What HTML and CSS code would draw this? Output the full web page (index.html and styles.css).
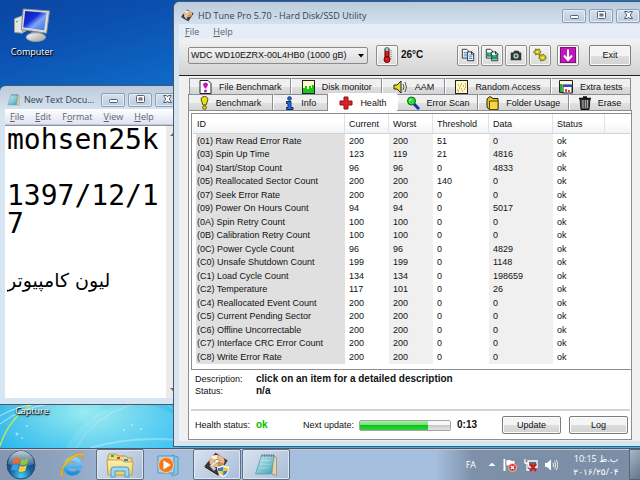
FILE: index.html
```html
<!DOCTYPE html>
<html lang="en">
<head>
<meta charset="utf-8">
<title>Desktop</title>
<link rel="stylesheet" href="styles.css">
</head>
<body>
<svg class="defs" width="0" height="0" aria-hidden="true">
  <defs>
    <linearGradient id="screen" x1="0" y1="0" x2="1" y2="1"><stop offset="0" stop-color="#0a1fa8"/><stop offset=".4" stop-color="#1230d8"/><stop offset=".6" stop-color="#7fa4f4"/><stop offset="1" stop-color="#2f6fe8"/></linearGradient>
    <linearGradient id="metal" x1="0" y1="0" x2="1" y2="1"><stop offset="0" stop-color="#fff"/><stop offset="1" stop-color="#9a9a9a"/></linearGradient>
    <radialGradient id="orb" cx=".5" cy=".9" r=".9"><stop offset="0" stop-color="#3fd0f6"/><stop offset=".45" stop-color="#155f9f"/><stop offset="1" stop-color="#173a64"/></radialGradient>
    <linearGradient id="gloss" x1="0" y1="0" x2="0" y2="1"><stop offset="0" stop-color="#fff" stop-opacity=".75"/><stop offset="1" stop-color="#fff" stop-opacity=".1"/></linearGradient>
    <linearGradient id="ie" x1="0" y1="0" x2="0" y2="1"><stop offset="0" stop-color="#7fdcff"/><stop offset="1" stop-color="#1b8fdc"/></linearGradient>
    <linearGradient id="page" x1="0" y1="0" x2="1" y2="1"><stop offset="0" stop-color="#c8f0f4"/><stop offset="1" stop-color="#3fa0b4"/></linearGradient>
    <linearGradient id="folder" x1="0" y1="0" x2="0" y2="1"><stop offset="0" stop-color="#fdf3b4"/><stop offset="1" stop-color="#eccb62"/></linearGradient>
    <symbol id="hdd" viewBox="0 0 32 32">
      <path d="M15 1 31 11 19 29 1 18z" fill="#3a3531"/><path d="M1 18 19 29v2L1 20z" fill="#17130f"/>
      <ellipse cx="17" cy="12" rx="10" ry="8" fill="#e9b98a"/><path d="M17 12 9 7a10 8 0 0 1 8-3z" fill="#fff3e2"/><path d="M17 12l9 3a10 8 0 0 1-7 5z" fill="#c98a54"/>
      <ellipse cx="17" cy="12" rx="3" ry="2.4" fill="#fff" stroke="#8a6a4a"/>
      <path d="M7 18l4-2 5 6-3 3z" fill="#c8c8c8"/><path d="M10 17l8-5" stroke="#eee" stroke-width="1.5"/>
    </symbol>
    <symbol id="notes" viewBox="0 0 32 32">
      <path d="M25 4l5 2v24l-6-2z" fill="#e4d4ae" stroke="#9c8a62"/><path d="M10 3h17l-4 25H2z" fill="url(#page)" stroke="#5b9aa6"/>
      <path d="M11 2v3M14 2v3M17 2v3M20 2v3M23 2v3M26 2v3" stroke="#6b6f70" stroke-width="1.4"/><path d="M9 10h14M8 15h14M7 20h14" stroke="#fff" stroke-opacity=".4"/>
    </symbol>
    <symbol id="min" viewBox="0 0 11 9"><rect x="1.5" y="4.5" width="8" height="3" rx="1" fill="#fff" stroke="#555f6c"/></symbol>
    <symbol id="max" viewBox="0 0 11 9"><rect x="1.5" y=".5" width="8" height="7" rx="1" fill="#fff" stroke="#555f6c"/><rect x="4" y="3" width="3" height="2" fill="#9fb0c4" stroke="#555f6c"/></symbol>
    <symbol id="cls" viewBox="0 0 11 9"><path d="M1.500.5h3l1 1.500 1-1.500h3L7.200 4 9.500 7.500h-3l-1-1.500-1 1.500h-3L3.800 4z" fill="#fff" stroke="#555f6c"/></symbol>
    <symbol id="docs" viewBox="0 0 16 16"><path d="M1.500 1.500h5l2 2v8h-7z" fill="#fff" stroke="#222"/><path d="M7.500 4.500h5l2 2v8h-7z" fill="#fff" stroke="#222"/><path d="M12 4v3h3" fill="none" stroke="#222"/></symbol>
  </defs>
</svg>

<main class="desktop">
  <svg class="streaks" viewBox="0 0 180 44" preserveAspectRatio="xMinYMax slice" aria-hidden="true">
    <circle cx="135" cy="76" r="76" fill="#fff" fill-opacity=".1"/>
    <path d="M76 44Q94 12 130 1t50 12" fill="none" stroke="#fff" stroke-opacity=".25"/>
    <path d="M90 44Q130 32 180 36" fill="none" stroke="#fff" stroke-opacity=".3" stroke-width="2"/>
    <path d="M0 42Q10 10 43-6" fill="none" stroke="#b4e85c" stroke-width="1.500"/>
    <path d="M0 20Q22 3 50 0M0 12Q16 2 38 0" fill="none" stroke="#fff" stroke-opacity=".6"/>
    <g fill="#fff" fill-opacity=".5"><circle cx="17" cy="30" r="1.500"/><circle cx="27" cy="22" r="1"/><circle cx="22" cy="34" r="1"/><circle cx="124" cy="26" r="1"/><circle cx="132" cy="21" r="1"/><circle cx="141" cy="25" r="1"/></g>
  </svg>

  <a class="shortcut computer" href="#computer">
    <svg width="38" height="35" viewBox="0 0 38 36" aria-hidden="true">
      <path d="M1 11l8-3v18l-8-1z" fill="#e4e4e4" stroke="#9b9b9b"/><path d="M9 8l4-1v17l-4 2z" fill="#b4b4b4"/><circle cx="3.500" cy="14" r="1" fill="#2fd02f"/>
      <path d="M18 25h10v4H18z" fill="#b4b4b4"/><ellipse cx="23" cy="30" rx="10" ry="4.500" fill="url(#metal)" stroke="#999"/>
      <path d="M10 1l27 2-3 23L8 22z" fill="#dcdcdc" stroke="#8c8c8c"/><path d="M12 3l22 2-2.500 18L10 20z" fill="url(#screen)"/>
    </svg>
    <span>Computer</span>
  </a>
  <a class="shortcut capture" href="#capture"><span>Capture</span></a>

  <section class="window notepad" aria-label="New Text Document">
    <header class="titlebar">
      <svg width="13" height="14" aria-hidden="true"><use href="#notes"/></svg>
      <h2>New Text Docu...</h2>
      <div class="controls">
        <button type="button" aria-label="Minimize"><svg width="11" height="9"><use href="#min"/></svg></button>
        <button type="button" aria-label="Maximize"><svg width="11" height="9"><use href="#max"/></svg></button>
        <button type="button" aria-label="Close"><svg width="11" height="9"><use href="#cls"/></svg></button>
      </div>
    </header>
    <nav class="menubar">
      <button type="button"><u>F</u>ile</button><button type="button"><u>E</u>dit</button><button type="button">F<u>o</u>rmat</button><button type="button"><u>V</u>iew</button><button type="button"><u>H</u>elp</button>
    </nav>
    <div class="paper">
      <div class="sheet">
        <textarea class="note" rows="5" spellcheck="false" aria-label="Note text">mohsen25k

1397/12/17
</textarea>
        <textarea class="note note-fa" rows="1" lang="fa" spellcheck="false" aria-label="Note text, Persian">لیون کامپیوتر</textarea>
      </div>
      <div class="scrolltrack"><i></i><i class="down"></i></div>
    </div>
  </section>

  <section class="window hdtune" aria-label="HD Tune Pro">
    <header class="titlebar">
      <svg width="13" height="13" aria-hidden="true"><use href="#hdd"/></svg>
      <h1>HD Tune Pro 5.70 - Hard Disk/SSD Utility</h1>
      <div class="controls">
        <button type="button" aria-label="Minimize"><svg width="11" height="9"><use href="#min"/></svg></button>
        <button type="button" aria-label="Maximize"><svg width="11" height="9"><use href="#max"/></svg></button>
        <button type="button" aria-label="Close"><svg width="11" height="9"><use href="#cls"/></svg></button>
      </div>
    </header>
    <nav class="menubar"><button type="button"><u>F</u>ile</button><button type="button"><u>H</u>elp</button></nav>

    <div class="client">
      <div class="toolbar">
        <div class="drive">
          <select aria-label="Drive"><option>WDC WD10EZRX-00L4HB0 (1000 gB)</option></select>
          <svg width="6" height="4" viewBox="0 0 6 4" aria-hidden="true"><path d="M0 0h6L3 3.500z" fill="#000"/></svg>
        </div>
        <button class="tool" type="button" aria-label="Temperature"><svg width="14" height="16" viewBox="0 0 14 16"><rect x="5" y="1" width="4" height="11" rx="1" fill="#e01818" stroke="#400"/><rect x="5.500" y="1" width="3" height="3" fill="#5fd8e0"/><circle cx="7" cy="12.500" r="3" fill="#e01818" stroke="#600"/><path d="M11 3v9" stroke="#a05050" stroke-dasharray="1 1"/></svg></button>
        <strong class="temp">26°C</strong>
        <div class="tools">
          <button class="tool" type="button" aria-label="Copy text"><svg width="14" height="14" viewBox="0 0 16 16"><use href="#docs"/><path d="M3 5h4M3 7h4M3 9h4M9 8h4M9 10h4M9 12h4" stroke="#2478d8"/></svg></button>
          <button class="tool" type="button" aria-label="Copy picture"><svg width="14" height="14" viewBox="0 0 16 16"><use href="#docs"/><path d="M2 5h5v5H2zM8 8h6v5H8z" fill="#12a050"/><path d="M4 6h2v2H4zM10 8h2v2h-2z" fill="#28b8e8"/></svg></button>
          <button class="tool" type="button" aria-label="Save screenshot"><svg width="14" height="14" viewBox="0 0 16 16"><path d="M2 5h3l1-2h5l1 2h2v9H2z" fill="#333"/><circle cx="8" cy="9" r="3" fill="#b8d4c8"/><circle cx="8" cy="9" r="1.500" fill="#2a7050"/></svg></button>
          <button class="tool" type="button" aria-label="Options"><svg width="14" height="14" viewBox="0 0 16 16"><g fill="#c8bc18" stroke="#6a6408"><path d="M1 4l2-1V1l2 1 2-1 1 2 1 1-1 2-1 2-2-1-2 1-1-2-1-1z"/><path d="M7 10l1-2 2 0 1-1 2 1 1 1 1 2-1 2-1 1-2 0-2 1-1-2-1-1z"/></g><circle cx="5" cy="4.500" r="1.200" fill="#fff880"/><circle cx="11" cy="11" r="1.300" fill="#fff880"/></svg></button>
          <button class="tool apart" type="button" aria-label="Minimize to tray"><svg width="16" height="16" viewBox="0 0 16 16"><rect x=".5" y=".5" width="15" height="15" fill="#c018b8" stroke="#801080"/><path d="M8 2.500v10M4 8.500l4 4.500 4-4.500" fill="none" stroke="#fff" stroke-width="2"/></svg></button>
        </div>
        <button class="push exit" type="button">Exit</button>
      </div>

      <div class="tabs" role="tablist">
        <div class="tabrow back">
          <button role="tab" type="button"><svg width="13" height="14" viewBox="0 0 13 14"><path d="M1 .5h8l3 3v10H1z" fill="#fff" stroke="#222"/><path d="M6.500 2.500Q10 3 8.500 6L7 8.500H6L4.500 6Q3 3 6.500 2.500z" fill="#c018c0"/><circle cx="6.500" cy="11" r="1.500" fill="#c018c0"/></svg>File Benchmark</button>
          <button role="tab" type="button"><svg width="13" height="14" viewBox="0 0 13 14"><rect x=".5" y=".5" width="12" height="13" fill="#fffbc8" stroke="#222"/><path d="M1 13V8h2V6h2v3h2V6h2v2h1V5h2v8z" fill="#18c818"/></svg>Disk monitor</button>
          <button role="tab" type="button"><svg width="15" height="14" viewBox="0 0 15 14"><path d="M1 5h3l4-4v12L4 9H1z" fill="#e8dc18" stroke="#222"/><path d="M10 4q2 3 0 6M12 2q3 5 0 10" fill="none" stroke="#555"/></svg>AAM</button>
          <button role="tab" type="button"><svg width="13" height="14" viewBox="0 0 13 14"><rect x=".5" y=".5" width="12" height="13" fill="#fffbc8" stroke="#222"/><path d="M2 10h1M4 8h1M6 9h1M8 6h1M10 4h1M3 5h1M6 4h1M9 9h1" stroke="#d8a018" stroke-width="1.500"/><path d="M3 11h1M7 11h1M5 6h1M10 7h1" stroke="#d04040"/></svg>Random Access</button>
          <button role="tab" type="button"><svg width="14" height="14" viewBox="0 0 14 14"><path d="M.5.5h13v12H.5z" fill="#fffbd8" stroke="#222"/><path d="M1 4h2v8H1z" fill="#18b818"/><rect x="4" y="5" width="9" height="8" fill="#fff" stroke="#222"/><path d="M4 5h9v2H4z" fill="#2848d8"/><path d="M6 12V9h2v3zM9 12v-2h2v2z" fill="#e04040"/></svg>Extra tests</button>
        </div>
        <div class="tabrow front">
          <button role="tab" type="button"><svg width="9" height="14" viewBox="0 0 9 14"><path d="M4.500.5Q9 1 7.500 5L6 9H3L1.500 5Q0 1 4.500.5z" fill="#e8e018" stroke="#555008"/><circle cx="4.500" cy="11.500" r="1.800" fill="#e8e018" stroke="#555008"/></svg>Benchmark</button>
          <button role="tab" type="button"><svg width="9" height="14" viewBox="0 0 9 14"><circle cx="4.500" cy="2.500" r="1.800" fill="#1878e0" stroke="#102860"/><path d="M1.500 5.500h4.500v6h2v2H1.500v-2H3v-4H1.500z" fill="#1878e0" stroke="#102860"/></svg>Info</button>
          <button role="tab" type="button" aria-selected="true"><svg width="14" height="14" viewBox="0 0 14 14"><path d="M5 1h4v4h4v4H9v4H5V9H1V5h4z" fill="#e02020" stroke="#801818"/></svg>Health</button>
          <button role="tab" type="button"><svg width="14" height="14" viewBox="0 0 14 14"><path d="M8 8l5 5" stroke="#1830a8" stroke-width="3"/><circle cx="5.500" cy="5" r="4" fill="#28e038" stroke="#185818"/><path d="M3.500 5q0-2 2-2" fill="none" stroke="#c8ffc8"/></svg>Error Scan</button>
          <button role="tab" type="button"><svg width="13" height="14" viewBox="0 0 13 14"><path d="M1 3l3-2.500 3 2h5v11H3L1 11z" fill="#e8c820" stroke="#222"/><path d="M3.500 5h8.500v8.500H3.500z" fill="#f4d840" stroke="#5a4a08"/></svg>Folder Usage</button>
          <button role="tab" type="button"><svg width="12" height="14" viewBox="0 0 12 14"><path d="M1 3h10l-1 10.500H2z" fill="#4a4a4a" stroke="#111"/><path d="M0 2.500h12M4 1h4" stroke="#111" stroke-width="1.500"/><path d="M4 4v8M6.500 4v8M8.500 4v8" stroke="#aaa"/></svg>Erase</button>
        </div>
      </div>

      <div class="panel" role="tabpanel">
        <div class="list">
          <table>
            <colgroup><col class="c-id"><col class="c-cur"><col class="c-worst"><col class="c-thr"><col class="c-data"><col class="c-stat"><col></colgroup>
            <thead><tr><th>ID</th><th>Current</th><th>Worst</th><th>Threshold</th><th>Data</th><th>Status</th><th></th></tr></thead>
            <tbody>
              <tr><td>(01) Raw Read Error Rate</td><td>200</td><td>200</td><td>51</td><td>0</td><td>ok</td><td></td></tr>
              <tr><td>(03) Spin Up Time</td><td>123</td><td>119</td><td>21</td><td>4816</td><td>ok</td><td></td></tr>
              <tr><td>(04) Start/Stop Count</td><td>96</td><td>96</td><td>0</td><td>4833</td><td>ok</td><td></td></tr>
              <tr><td>(05) Reallocated Sector Count</td><td>200</td><td>200</td><td>140</td><td>0</td><td>ok</td><td></td></tr>
              <tr><td>(07) Seek Error Rate</td><td>200</td><td>200</td><td>0</td><td>0</td><td>ok</td><td></td></tr>
              <tr><td>(09) Power On Hours Count</td><td>94</td><td>94</td><td>0</td><td>5017</td><td>ok</td><td></td></tr>
              <tr><td>(0A) Spin Retry Count</td><td>100</td><td>100</td><td>0</td><td>0</td><td>ok</td><td></td></tr>
              <tr><td>(0B) Calibration Retry Count</td><td>100</td><td>100</td><td>0</td><td>0</td><td>ok</td><td></td></tr>
              <tr><td>(0C) Power Cycle Count</td><td>96</td><td>96</td><td>0</td><td>4829</td><td>ok</td><td></td></tr>
              <tr><td>(C0) Unsafe Shutdown Count</td><td>199</td><td>199</td><td>0</td><td>1148</td><td>ok</td><td></td></tr>
              <tr><td>(C1) Load Cycle Count</td><td>134</td><td>134</td><td>0</td><td>198659</td><td>ok</td><td></td></tr>
              <tr><td>(C2) Temperature</td><td>117</td><td>101</td><td>0</td><td>26</td><td>ok</td><td></td></tr>
              <tr><td>(C4) Reallocated Event Count</td><td>200</td><td>200</td><td>0</td><td>0</td><td>ok</td><td></td></tr>
              <tr><td>(C5) Current Pending Sector</td><td>200</td><td>200</td><td>0</td><td>0</td><td>ok</td><td></td></tr>
              <tr><td>(C6) Offline Uncorrectable</td><td>200</td><td>200</td><td>0</td><td>0</td><td>ok</td><td></td></tr>
              <tr><td>(C7) Interface CRC Error Count</td><td>200</td><td>200</td><td>0</td><td>0</td><td>ok</td><td></td></tr>
              <tr><td>(C8) Write Error Rate</td><td>200</td><td>200</td><td>0</td><td>0</td><td>ok</td><td></td></tr>
            </tbody>
          </table>
        </div>
        <dl class="details">
          <dt>Description:</dt><dd>click on an item for a detailed description</dd>
          <dt>Status:</dt><dd>n/a</dd>
        </dl>
        <div class="footer">
          <span class="key">Health status:</span><strong class="ok">ok</strong>
          <label for="next">Next update:</label><progress id="next" max="100" value="76"></progress><strong class="left">0:13</strong>
          <button class="push" type="button">Update</button><button class="push" type="button">Log</button>
        </div>
      </div>
    </div>
  </section>
</main>

<footer class="taskbar">
  <button class="start" type="button" aria-label="Start"><svg width="30" height="30" viewBox="0 0 30 30">
    <circle cx="15" cy="15" r="14" fill="url(#orb)" stroke="#2c4a6a"/><path d="M2 14a13 13 0 0 1 26 0q-13 5-26 0z" fill="url(#gloss)"/>
    <path d="M8 9q3-2 6.500-.5L13 14q-3-1.500-6.500 0z" fill="#f06a28"/><path d="M15.500 9q3.500 1.500 7-.5L21 14q-3.500 2-7 .5z" fill="#8cc83c"/><path d="M6.200 15.200q3.500-1.700 6.600 0L11.200 21q-3-1.800-6.400-.2z" fill="#3c9ce8"/><path d="M13.800 15.800q3.500 1.500 7-.5l-1.500 5.500q-3.500 2-7 .4z" fill="#fccc30"/>
  </svg></button>
  <button class="task ie" type="button" aria-label="Internet Explorer"><svg width="26" height="26" viewBox="0 0 26 26">
    <path d="M20 18a7.500 7.500 0 1 1 1-5v1.500H8" fill="none" stroke="url(#ie)" stroke-width="4"/><path d="M3 25Q-1 22 5 12T22 1q4 0 2 6 0-4-3-4-6 1-13 8.500T4 23z" fill="#f4c020" stroke="#c88c10" stroke-width=".5"/>
  </svg></button>
  <button class="task open" type="button" aria-label="Explorer"><svg width="28" height="26" viewBox="0 0 28 26">
    <path d="M2 4q0-2 2-2h6l2 2h8l2 2h4v15H2z" fill="#f2d984" stroke="#b8964a"/><path d="M5 3h3v2H5z" fill="#28b048"/><path d="M11 5h3v2h-3z" fill="#e04030"/><path d="M18 7h4v2h-4z" fill="#3088e0"/><path d="M1 8h15l2 2h9l-1 13H2z" fill="url(#folder)" stroke="#c0a050"/><path d="M5 25v-7q0-3 3-3h12q3 0 3 3v7h-4v-6H9v6z" fill="#9cd8f0" stroke="#4c9cc4"/>
  </svg></button>
  <button class="task" type="button" aria-label="Media Player"><svg width="24" height="24" viewBox="0 0 24 24">
    <path d="M15 2l6 2v17l-6 2z" fill="#8cc4e4" stroke="#5498c0"/><path d="M1 3h16v17H1z" fill="#a8d4ec" stroke="#5498c0"/><circle cx="9" cy="12" r="7.500" fill="#f47818" stroke="#f8c89c"/><path d="M6.500 7.500 14 12l-7.500 4.500z" fill="#fff"/>
  </svg></button>
  <button class="task open" type="button" aria-label="HD Tune Pro"><svg width="26" height="26" viewBox="0 0 34 34"><use href="#hdd" width="32" height="32"/><path d="M25 17q4 3 8 2 0 11-8 14-8-3-8-14 4 1 8-2z" fill="#fff"/><path d="M25 19v6h-6.500l-.5-4q4 0 7-2zM25 25h6q-1 4-6 6.500z" fill="#2880d8"/><path d="M25 19q3 2 7 2l-.5 4H25zM25 25v6.500q-5-2.500-6-6.500z" fill="#f4c828"/></svg></button>
  <button class="task open" type="button" aria-label="Notepad"><svg width="26" height="24"><use href="#notes"/></svg></button>
  <div class="tray">
    <span class="lang">FA</span>
    <button type="button" aria-label="Show hidden icons"><svg width="8" height="5" viewBox="0 0 8 5"><path d="M.5 4 4 .8 7.500 4z" fill="#fff"/></svg></button>
    <button type="button" aria-label="Action Center"><svg width="14" height="14" viewBox="0 0 14 14"><path d="M1.500 1v12" stroke="#fff" stroke-width="2"/><path d="M3 2q3-1 5 0t4 0v6q-2 1-4 0t-5 0z" fill="#fff" stroke="#5a6472" stroke-width=".6"/><circle cx="9.500" cy="9.500" r="4" fill="#e03428" stroke="#fff" stroke-width=".6"/><path d="M8 8l3 3M11 8l-3 3" stroke="#fff" stroke-width="1.300"/></svg></button>
    <button type="button" aria-label="Network"><svg width="14" height="14" viewBox="0 0 14 14"><path d="M1 1v4h2v7h4M4 3h9v6H5z" fill="#5c6c84" stroke="#fff" stroke-width="1.300"/><path d="M6 6l6 7M12 6l-6 7" stroke="#d01818" stroke-width="2.400"/></svg></button>
    <button type="button" aria-label="Volume"><svg width="13" height="12" viewBox="0 0 13 12"><path d="M0 4h2l4-3.500v11L2 8H0z" fill="#fff"/><path d="M8 4q1.500 2 0 4M9.500 2.500q3 3.500 0 7M11 1q4 5 0 10" fill="none" stroke="#fff" stroke-width=".9"/></svg></button>
    <time class="clock"><span dir="rtl">ب.ظ 10:15</span><span dir="ltr">۲۰۱۶/۲۵/۰۴</span></time>
  </div>
  <button class="peek" type="button" aria-label="Show desktop"></button>
</footer>
</body>
</html>
```
FILE: styles.css
```css
* { box-sizing: border-box; }
html, body { height: 100%; margin: 0; }
body {
  display: flex;
  flex-direction: column;
  overflow: hidden;
  color: #111;
  font: 9px/12px "Liberation Sans", Arial, sans-serif;
}
button { margin: 0; padding: 0; border: 0; background: none; color: inherit; font: inherit; }
svg { display: block; flex: none; }
h1, h2 { margin: 0; font: inherit; }
.defs { position: absolute; }

/* Desktop */
.desktop {
  position: relative;
  flex: 1;
  min-height: 0;
  overflow: hidden;
  background:
    radial-gradient(ellipse 120px 60px at 85px 92%, #98ecf0 0, #98ecf000 100%),
    linear-gradient(165deg, #0a45a2 0, #0b50b0 8%, #1070cc 24%, #18a0e4 60%, #22bcf4 80%);
}
.streaks { position: absolute; left: 0; bottom: 0; width: 180px; height: 44px; }
.shortcut {
  position: absolute;
  display: flex;
  flex-direction: column;
  align-items: center;
  gap: 2px;
  width: 64px;
  color: #fff;
  font: 9px/14px "Open Sans", "Noto Sans", sans-serif;
  text-decoration: none;
  text-shadow: 0 1px 2px #000, 1px 1px 1px #000;
}
.computer { left: 0; top: 8px; }
.capture { left: 0; top: 404px; }

/* Window frames */
.window {
  position: absolute;
  display: flex;
  flex-direction: column;
  border: 1px solid #4c5866;
  border-radius: 6px 6px 0 0;
  background: linear-gradient(#bccbdc, #d7e4f2 26px);
}
.titlebar {
  display: flex;
  align-items: center;
  gap: 4px;
  height: 22px;
  color: #36414e;
  font: 9px/14px "Open Sans", "Noto Sans", sans-serif;
  white-space: nowrap;
}
.controls { display: flex; gap: 3px; margin-left: auto; }
.controls button {
  display: grid;
  place-items: center;
  width: 24px;
  height: 14px;
  border: 1px solid #8e9eb2;
  border-radius: 2px;
  background: linear-gradient(#d4e0ee, #bccbdc);
  box-shadow: inset 0 0 0 1px #e4edf6;
}
.menubar {
  display: flex;
  align-items: center;
  color: #5c6168;
  font: 9px/14px "Open Sans", "Noto Sans", sans-serif;
}

/* Notepad */
.notepad { left: 0; top: 85px; width: 186px; height: 320px; padding: 0 6px 6px 5px; border-left: 0; }
.notepad .titlebar { height: 23px; padding: 4px 0 0 2px; }
.notepad .menubar { gap: 11px; height: 16px; padding-left: 5px; background: linear-gradient(#fff, #dfe3f2); border-bottom: 1px solid #c4c8d8; }
.paper { display: flex; flex: 1; min-height: 0; border-top: 1px solid #8894a4; background: #fff; }
.sheet { flex: 1; min-width: 0; padding: 0 0 0 2px; }
.note {
  display: block;
  width: 100%;
  margin: 0;
  padding: 0;
  border: 0;
  outline: 0;
  resize: none;
  overflow: hidden;
  background: none;
  color: #000;
  font: 28px/28px "DejaVu Sans Mono", monospace;
  word-break: break-all;
}
.note-fa { font-family: "DejaVu Sans", sans-serif; font-size: 19px; }
.scrolltrack { display: flex; flex-direction: column; justify-content: space-between; align-items: center; width: 13px; padding: 7px 0; background: #ebebeb; }
.scrolltrack i { border: 3px solid transparent; border-top: 0; border-bottom-color: #666; }
.scrolltrack .down { transform: rotate(180deg); }

/* HD Tune */
.hdtune { left: 173px; right: 0; top: 1px; bottom: 1px; padding: 0 0 5px 5px; border-right: 0; border-radius: 6px 0 0 0; }
.hdtune .titlebar { padding: 5px 0 0 2px; }
.hdtune .menubar { gap: 14px; height: 15px; padding-left: 6px; background: #e6edf6; }
.client { display: flex; flex: 1; flex-direction: column; min-height: 0; background: #f0f0f0; }
.toolbar {
  display: flex;
  align-items: center;
  height: 37px;
  padding: 0 9px 4px;
  border-bottom: 1px solid #222;
  background: linear-gradient(#f2f2f2, #d2d2d2);
}
.drive { position: relative; width: 180px; }
.drive select {
  display: block;
  appearance: none;
  width: 100%;
  height: 17px;
  padding: 0 2px;
  border: 1px solid #8a8a8a;
  border-radius: 2px;
  background: linear-gradient(#f2f2f2, #dcdcdc);
  color: #111;
  font: inherit;
}
.drive svg { position: absolute; right: 4px; top: 7px; }
.tool {
  display: grid;
  place-items: center;
  width: 22px;
  height: 21px;
  border: 1px solid #8c8c8c;
  border-radius: 2px;
  background: linear-gradient(#f4f4f4, #dadada);
  box-shadow: inset 0 0 0 1px #fafafa;
}
.drive + .tool { margin: 0 3px 0 8px; }
.tools { display: flex; gap: 2px; margin-left: auto; }
.apart { margin-left: 4px; }
.temp, .left, .details dd, .ok { font-size: 10px; font-weight: bold; }
.push {
  height: 18px;
  width: 59px;
  border: 1px solid #7c7c7c;
  border-radius: 2px;
  background: linear-gradient(#f4f4f4 50%, #dedede 51%, #d2d2d2);
  box-shadow: inset 0 0 0 1px #fafafa;
}
.exit { width: 42px; height: 21px; margin-left: 10px; }

.tabs { margin: 2px 9px 0; }
.tabrow { display: grid; height: 16px; }
.tabrow.back { grid-template-columns: 102fr 90fr 63fr 105fr 80fr; margin-left: 1px; }
.tabrow.front { grid-template-columns: 85fr 55fr 69fr 80fr 91fr 62fr; }
.tabrow button {
  display: flex;
  align-items: center;
  justify-content: center;
  gap: 7px;
  border: 1px solid #8a8d94;
  border-width: 1px 1px 0 1px;
  background: linear-gradient(#f0f0f0 50%, #e0e0e0 51%, #d4d4d4);
  white-space: nowrap;
}
.tabrow button + button { border-left-color: #fff; }
.tabrow [aria-selected] { position: relative; height: 18px; margin-top: -1px; border-color: #fff; background: #fff; }

.panel { display: flex; flex: 1; flex-direction: column; min-height: 0; margin: 0 8px 1px 9px; border: 1px solid #8a8d94; background: #fff; }
.list { flex: 1; min-height: 0; margin: 2px 0 0 2px; padding: 0 1px 5px 1px; border: 1px solid #8a8d94; border-right: 0; }
table { width: 100%; height: 100%; table-layout: fixed; border-collapse: separate; border-spacing: 0; }
.c-id { width: 152px; }
.c-cur, .c-worst { width: 44px; }
.c-thr { width: 56px; }
.c-data { width: 64px; }
.c-stat { width: 52px; }
th, td { padding: 0 0 0 4px; text-align: left; font-weight: normal; white-space: nowrap; overflow: hidden; }
th { height: 20px; border-right: 1px solid #dfe2e6; border-bottom: 1px solid #d0d3d8; background: linear-gradient(#fff 40%, #f1f3f5); }
th:last-child { border-right: 0; }
td:nth-child(1) { background: #e0e0e0; border-left: 3px solid #fff; padding-left: 1px; }
td:nth-child(3), td:nth-child(5) { background: #f0f0f0; }

.details { display: grid; grid-template-columns: 61px 1fr; margin: 3px 0 0 6px; }
.details dd { margin: 0; }
.footer { display: flex; align-items: center; height: 30px; margin: 12px 1px 0 2px; padding: 0 2px 0 4px; border-top: 2px solid #d4d4d4; white-space: nowrap; }
.key { width: 61px; }
.ok { width: 47px; color: #00c000; }
.footer label { width: 56px; }
.footer progress { appearance: none; width: 92px; height: 11px; border: 1px solid #a4a4a4; border-radius: 2px; background: #dcdcdc; }
.footer progress::-webkit-progress-bar { background: linear-gradient(#f8f8f8 40%, #cacaca 50%, #e4e4e4); }
.footer progress::-webkit-progress-value { background: linear-gradient(#a8f0a8, #78e078 40%, #10c020 50%, #28d838); }
.left { margin: 0 auto 0 6px; }
.footer .push + .push { margin-left: 8px; }

/* Taskbar */
.taskbar {
  display: flex;
  align-items: center;
  height: 32px;
  border-top: 1px solid #4c5664;
  background: linear-gradient(90deg, #8496b0 0, #8fa4c0 10%, #a6bedc 20%, #a6bfde 68%, #7e90a8 74%, #7c8ea6 100%);
  box-shadow: inset 0 1px #bccbdf;
}
.start { width: 30px; margin-left: 6px; }
.task { display: grid; place-items: center; width: 48px; height: 31px; }
.ie { margin-left: 12px; }
.open { border: 1px solid #5f6f86; border-radius: 2px; background: linear-gradient(135deg, #d8e2f0, #a9bcd6); box-shadow: inset 0 0 0 1px #dce6f2; margin-right: 1px; }
.tray { display: flex; align-items: center; gap: 7px; margin-left: auto; color: #fff; font: 9px/13px "Open Sans", "DejaVu Sans", sans-serif; }
.lang { margin-right: 5px; }
.clock { display: flex; flex-direction: column; align-items: center; width: 62px; }
.peek { align-self: stretch; width: 11px; margin-left: 2px; border: 1px solid #56657a; border-right: 0; background: linear-gradient(135deg, #a8b6c8, #64748a); }
```
